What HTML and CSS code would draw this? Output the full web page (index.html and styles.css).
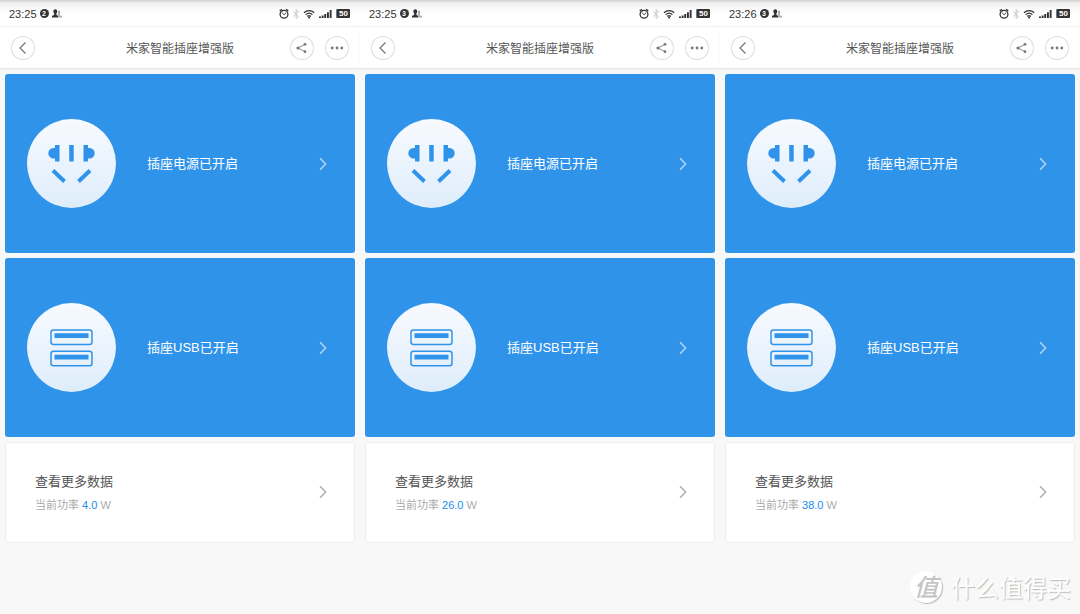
FILE: index.html
```html
<!DOCTYPE html>
<html lang="zh-CN">
<head>
<meta charset="utf-8">
<meta name="viewport" content="width=device-width, initial-scale=1">
<title>米家智能插座增强版</title>
<link rel="stylesheet" href="styles.css">
</head>
<body>
<svg class="sprite" aria-hidden="true">
  <symbol id="people" viewBox="0 0 10 9">
    <path fill="#aaa" d="M6.200 1.500c1.600-.5 2.300.6 2 1.900L7.900 5v1.200L10 7.200v1.400H6.800V7L5.900 5.500z"/>
    <path fill="#333" d="M3.300.3C4.800.3 5.300 1.300 5.200 2.600 5.100 3.700 4.800 4.300 4.400 4.700v1L6.300 6.900v1.700H0V6.900l2.200-1.200v-1C1.800 4.300 1.500 3.700 1.400 2.600 1.300 1.300 1.800.3 3.300.3z"/>
  </symbol>
  <symbol id="status" viewBox="0 0 56 12">
    <g fill="none" stroke="#333">
      <circle cx="5" cy="6.300" r="3.900" stroke-width="1.300"/>
      <path stroke-width="1.300" d="M.7 3 2.900 1.200M9.300 3 7.100 1.200"/>
      <path d="M3.300 5l1.900 1.700L7 4.900"/>
      <path stroke="#c8c8c8" d="M14.500 3.500l5 5-2.400 2V1.500l2.400 2-5 5"/>
      <path stroke-width="1.200" d="M25 4.800c3-2.800 7.300-2.800 10.200 0M26.800 6.700c2-1.800 4.600-1.800 6.600 0M28.400 8.500c1-.9 2.400-.9 3.400 0"/>
    </g>
    <g fill="#333">
      <circle cx="30.100" cy="9.600" r="1"/>
      <path d="M40 8.500h2V10h-2zM42.700 7.600h1.900V10h-1.900zM45.300 6h1.900v4h-1.900zM48 4.200h1.900V10H48zM50.700 2h1.900v8h-1.900z"/>
    </g>
  </symbol>
  <symbol id="back" viewBox="0 0 24 24">
    <path fill="none" stroke="#777" stroke-width="1.300" d="M14.500 6.500L9 12l5.500 5.500"/>
  </symbol>
  <symbol id="share" viewBox="0 0 24 24">
    <path fill="none" stroke="#888" d="M15 8.300L8 12l7 3.700"/>
    <g fill="#777"><circle cx="8" cy="12" r="1.600"/><circle cx="15" cy="8.300" r="1.400"/><circle cx="15" cy="15.700" r="1.400"/></g>
  </symbol>
  <symbol id="more" viewBox="0 0 24 24">
    <g fill="#777"><circle cx="7.200" cy="12" r="1.400"/><circle cx="12" cy="12" r="1.400"/><circle cx="16.800" cy="12" r="1.400"/></g>
  </symbol>
  <symbol id="chevron" viewBox="0 0 8 14">
    <path fill="none" stroke="currentColor" stroke-width="1.400" d="M1 1.200L6.700 7 1 12.800"/>
  </symbol>
  <symbol id="socket" viewBox="0 0 89 89">
    <g fill="#2f93ea">
      <path d="M28 26h4.500v16.500H28v-3h-1.500a5.200 5.200 0 0 1 0-10.400H28z"/>
      <path d="M42.200 26h4.500v16.500h-4.500z"/>
      <path d="M61 26h-4.500v16.500H61v-3h1.500a5.200 5.200 0 0 0 0-10.400H61z"/>
    </g>
    <path fill="none" stroke="#2f93ea" stroke-width="4" d="M26 51.500l11.500 11M63 51.500l-11.500 11"/>
  </symbol>
  <symbol id="usb" viewBox="0 0 89 89">
    <g fill="none" stroke="#2f93ea" stroke-width="1.500">
      <rect x="24" y="27" width="41" height="14.500" rx="2.500"/>
      <rect x="24" y="48.200" width="41" height="14.500" rx="2.500"/>
    </g>
    <path fill="#2f93ea" d="M27.500 30.300h34v4.700h-34zM27.500 51.700h34v4.700h-34z"/>
  </symbol>
</svg>

<main class="screens">
  <section class="phone">
    <div class="statusbar">
      <span class="time">23:25</span><span class="count">2</span><svg class="people"><use href="#people"/></svg>
      <svg class="indicators"><use href="#status"/></svg><span class="battery">50</span>
    </div>
    <header class="titlebar">
      <button class="round" aria-label="返回"><svg><use href="#back"/></svg></button>
      <h1 class="title">米家智能插座增强版</h1>
      <button class="round" aria-label="分享"><svg><use href="#share"/></svg></button>
      <button class="round" aria-label="更多"><svg><use href="#more"/></svg></button>
    </header>
    <div class="cards">
      <button class="card power"><svg class="disc"><use href="#socket"/></svg><span class="label">插座电源已开启</span><svg class="chevron"><use href="#chevron"/></svg></button>
      <button class="card power"><svg class="disc"><use href="#usb"/></svg><span class="label">插座USB已开启</span><svg class="chevron"><use href="#chevron"/></svg></button>
      <button class="card data"><span class="info"><span class="heading">查看更多数据</span><span class="reading">当前功率 <span class="value">4.0</span> W</span></span><svg class="chevron"><use href="#chevron"/></svg></button>
    </div>
  </section>

  <section class="phone">
    <div class="statusbar">
      <span class="time">23:25</span><span class="count">3</span><svg class="people"><use href="#people"/></svg>
      <svg class="indicators"><use href="#status"/></svg><span class="battery">50</span>
    </div>
    <header class="titlebar">
      <button class="round" aria-label="返回"><svg><use href="#back"/></svg></button>
      <h1 class="title">米家智能插座增强版</h1>
      <button class="round" aria-label="分享"><svg><use href="#share"/></svg></button>
      <button class="round" aria-label="更多"><svg><use href="#more"/></svg></button>
    </header>
    <div class="cards">
      <button class="card power"><svg class="disc"><use href="#socket"/></svg><span class="label">插座电源已开启</span><svg class="chevron"><use href="#chevron"/></svg></button>
      <button class="card power"><svg class="disc"><use href="#usb"/></svg><span class="label">插座USB已开启</span><svg class="chevron"><use href="#chevron"/></svg></button>
      <button class="card data"><span class="info"><span class="heading">查看更多数据</span><span class="reading">当前功率 <span class="value">26.0</span> W</span></span><svg class="chevron"><use href="#chevron"/></svg></button>
    </div>
  </section>

  <section class="phone">
    <div class="statusbar">
      <span class="time">23:26</span><span class="count">3</span><svg class="people"><use href="#people"/></svg>
      <svg class="indicators"><use href="#status"/></svg><span class="battery">50</span>
    </div>
    <header class="titlebar">
      <button class="round" aria-label="返回"><svg><use href="#back"/></svg></button>
      <h1 class="title">米家智能插座增强版</h1>
      <button class="round" aria-label="分享"><svg><use href="#share"/></svg></button>
      <button class="round" aria-label="更多"><svg><use href="#more"/></svg></button>
    </header>
    <div class="cards">
      <button class="card power"><svg class="disc"><use href="#socket"/></svg><span class="label">插座电源已开启</span><svg class="chevron"><use href="#chevron"/></svg></button>
      <button class="card power"><svg class="disc"><use href="#usb"/></svg><span class="label">插座USB已开启</span><svg class="chevron"><use href="#chevron"/></svg></button>
      <button class="card data"><span class="info"><span class="heading">查看更多数据</span><span class="reading">当前功率 <span class="value">38.0</span> W</span></span><svg class="chevron"><use href="#chevron"/></svg></button>
    </div>
  </section>
</main>

<div class="watermark"><span class="seal">值</span><span>什么值得买</span></div>
</body>
</html>
```

FILE: styles.css
```css
* { box-sizing: border-box; }

body {
  margin: 0;
  min-height: 100vh;
  position: relative;
  background: #f8f8f8;
  font-family: "Liberation Sans", "Noto Sans CJK SC", sans-serif;
}

button {
  margin: 0;
  padding: 0;
  border: 0;
  font: inherit;
  cursor: pointer;
}

.sprite { position: absolute; width: 0; height: 0; }

.screens {
  display: grid;
  grid-template-columns: repeat(3, 1fr);
}

.statusbar {
  display: flex;
  align-items: center;
  height: 27px;
  padding: 1px 10px 0 9px;
  background: linear-gradient(#d0d0d0, #eeeeee 3px, #fafafa 9px, #ffffff 14px);
  border-bottom: 1px solid #f3f3f3;
  color: #333;
}

.time { font-size: 11px; line-height: 14px; }

.count {
  width: 9px;
  height: 9px;
  margin: 0 3px;
  border-radius: 50%;
  background: #333;
  color: #fff;
  font-size: 7px;
  font-weight: bold;
  line-height: 9px;
  text-align: center;
}

.people { width: 10px; height: 9px; }
.indicators { width: 56px; height: 12px; margin-left: auto; }

.battery {
  width: 13px;
  height: 9px;
  margin-left: 2px;
  border-radius: 1px;
  background: #333;
  box-shadow: -1px 0 0 -0px #777;
  color: #fff;
  font-size: 8px;
  font-weight: bold;
  line-height: 9px;
  text-align: center;
}

.titlebar {
  display: grid;
  grid-template-columns: 59px 1fr 24px 24px;
  align-items: center;
  height: 42px;
  padding: 0 11px;
  column-gap: 11px;
  background: #fff;
  border-bottom: 1px solid #e8e8e8;
  box-shadow: 0 1px 2px #f0f0f0;
}

.title {
  margin: 0;
  color: #555;
  font-size: 12px;
  font-weight: normal;
  line-height: 20px;
  padding-top: 2px;
  text-align: center;
}

.round {
  width: 24px;
  height: 24px;
  border-radius: 50%;
  background: #fff;
  box-shadow: inset 0 0 0 1px #dcdcdc;
}

.round svg { display: block; width: 24px; height: 24px; }

.cards {
  display: flex;
  flex-direction: column;
  gap: 5px;
  padding: 5px;
}

.card {
  display: flex;
  align-items: center;
  width: 100%;
  border-radius: 3px;
  text-align: left;
}

.power {
  padding: 45px 28px 45px 22px;
  background: #2f93ea;
  color: #fff;
}

.disc {
  flex: none;
  width: 89px;
  height: 89px;
  border-radius: 50%;
  background: linear-gradient(#f7faff, #deedfb);
}

.label {
  margin-left: 31px;
  font-size: 13px;
  line-height: 20px;
}

.chevron {
  flex: none;
  width: 8px;
  height: 14px;
  margin-left: auto;
  color: #b4d8f8;
}

.data {
  padding: 28px 28px 29px 30px;
  background: #fff;
  box-shadow: inset 0 0 0 1px #eee;
}

.data .chevron { color: #aaa; }

.info { display: flex; flex-direction: column; gap: 2px; }
.heading { color: #555; font-size: 13px; line-height: 24px; }
.reading { color: #aaa; font-size: 11px; line-height: 18px; }
.value { color: #1d8cea; }

.watermark {
  position: absolute;
  right: 9px;
  bottom: 11px;
  display: flex;
  align-items: center;
  gap: 9px;
  color: #fff;
  font-family: "Noto Sans CJK SC", sans-serif;
  font-size: 24px;
  line-height: 32px;
  text-shadow: 1px 1px 1px #bbb;
}

.seal {
  width: 32px;
  height: 32px;
  border-radius: 50%;
  background: #fff;
  box-shadow: 1px 1px 1px #bbb;
  color: #c4c4c4;
  font-style: italic;
  font-weight: 500;
  line-height: 30px;
  text-align: center;
  text-shadow: none;
}
```
